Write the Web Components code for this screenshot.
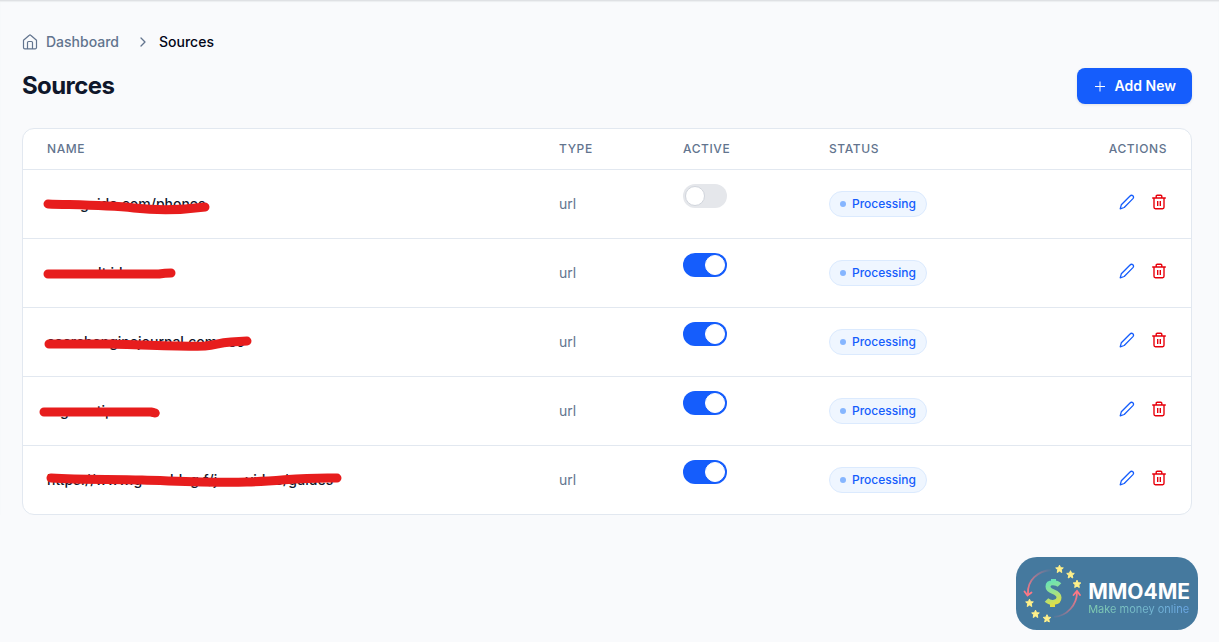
<!DOCTYPE html>
<html lang="en">
<head>
<meta charset="utf-8">
<meta name="viewport" content="width=device-width, initial-scale=1">
<title>Sources</title>
<style>
  body { margin: 0; min-height: 100vh; background: #f9fafc; color: #0f172b; font: 14px/20px Inter, "Liberation Sans", sans-serif; }
</style>
</head>
<body>
<sources-page></sources-page>
<script>
const define = (name, html, setup) => {
  const template = document.createElement('template');
  template.innerHTML = html;
  customElements.define(name, class extends HTMLElement {
    connectedCallback() {
      if (this.shadowRoot) return;
      const root = this.attachShadow({ mode: 'open' });
      root.append(template.content.cloneNode(true));
      if (setup) setup(this, root);
    }
  });
};

define('bread-crumb', `
<style>
  :host { display: block; }
  nav { display: flex; align-items: center; font-weight: 500; color: #62748e; }
  a { display: flex; align-items: center; gap: 8px; color: inherit; text-decoration: none; }
  .chevron { margin: 0 8px 0 16px; }
  span { color: #020618; }
</style>
<nav aria-label="Breadcrumb">
  <a href="#dashboard">
    <svg width="16" height="16" viewBox="0 0 16 16" fill="none" stroke="currentColor" stroke-width="1.2" stroke-linejoin="round"><path d="M1.5 6.2 7.3 1.3a1 1 0 0 1 1.4 0l5.800 4.900v7.300a1.300 1.300 0 0 1-1.300 1.300H2.800a1.300 1.300 0 0 1-1.300-1.300zM5.500 14.500V8.500q0-1 1-1h3q1 0 1 1v6"/></svg>
    Dashboard
  </a>
  <svg class="chevron" width="16" height="16" viewBox="0 0 16 16" fill="none" stroke="currentColor" stroke-width="1.3" stroke-linecap="round" stroke-linejoin="round"><path d="m6 4 4 4-4 4"/></svg>
  <span aria-current="page">Sources</span>
</nav>`);

define('primary-button', `
<style>
  :host { display: block; }
  button { display: flex; align-items: center; gap: 8px; height: 36px; padding: 0 16px; border: 0; border-radius: 8px; background: #155dfc; color: #fff; font: 600 14px/20px Inter, sans-serif; box-shadow: 0 1px 3px #0000001a; cursor: pointer; }
</style>
<button type="button">
  <svg width="14" height="14" viewBox="0 0 14 14" stroke="#fff" stroke-width="1"><path d="M7 2.500v10M2 7.500h10"/></svg>
  <slot></slot>
</button>`);

define('toggle-switch', `
<style>
  :host { display: block; }
  input { appearance: none; display: flex; align-items: center; box-sizing: border-box; width: 44px; height: 24px; margin: 0; padding: 2px; border-radius: 12px; background: #e5e7eb; cursor: pointer; }
  input::before { content: ""; box-sizing: border-box; width: 20px; height: 20px; border: 1px solid #d1d5dc; border-radius: 50%; background: #fff; }
  input:checked { background: #155dfc; justify-content: flex-end; }
  input:checked::before { border-color: #fff; }
</style>
<input type="checkbox" role="switch">`, (host, root) => {
  const input = root.querySelector('input');
  input.checked = host.hasAttribute('checked');
  input.setAttribute('aria-label', host.getAttribute('label'));
});

define('status-pill', `
<style>
  :host { display: inline-flex; align-items: center; gap: 6px; box-sizing: border-box; height: 26px; padding: 0 10px; border: 1px solid #dbeafe; border-radius: 13px; background: #eff6ff; color: #155dfc; font-size: 12px; line-height: 16px; font-weight: 500; vertical-align: middle; }
  i { width: 6px; height: 6px; border-radius: 50%; background: #86b6ff; }
</style>
<i></i><slot></slot>`);

define('row-actions', `
<style>
  :host { display: flex; justify-content: flex-end; gap: 16px; }
  button { display: block; width: 16px; height: 16px; padding: 0; border: 0; background: none; cursor: pointer; }
  svg { display: block; }
  .edit { color: #155dfc; }
  .delete { color: #e7000b; }
</style>
<button class="edit" type="button" aria-label="Edit"><svg width="16" height="16" viewBox="0 0 16 16" fill="none" stroke="currentColor" stroke-width="1.3" stroke-linejoin="round"><path d="M1.2 14.8 2.3 10.8 10.8 2.2c1-1 2.2-1.2 3.1-.4.9.9.7 2.1-.2 3.1L5.2 13.5z"/></svg></button>
<button class="delete" type="button" aria-label="Delete"><svg width="16" height="16" viewBox="0 0 16 16" fill="none" stroke="currentColor" stroke-width="1.4" stroke-linejoin="round"><path d="M1.2 4h13.600M5.200 4V2.200q0-1 1-1h3.600q1 0 1 1V4M3 4v9.300q0 1.400 1.400 1.400h7.200q1.400 0 1.400-1.400V4M6.700 7v5M9.300 7v5"/></svg></button>`);

define('struck-name', `
<style>
  :host { display: block; position: relative; height: 20px; white-space: nowrap; }
  svg { position: absolute; left: -8px; top: 0; overflow: visible; pointer-events: none; }
  .text { display: flex; }
</style>
<div class="text"></div>
<svg width="310" height="20" viewBox="-8 0 310 20" aria-hidden="true"><path fill="none" stroke="#e71d1d" stroke-width="9" stroke-linecap="round" stroke-linejoin="round"/></svg>`, (host, root) => {
  const text = root.querySelector('.text');
  for (const [gap, word] of JSON.parse(host.getAttribute('parts'))) {
    const part = document.createElement('span');
    part.textContent = word;
    part.style.marginLeft = gap + 'px';
    text.append(part);
  }
  root.querySelector('path').setAttribute('d', host.getAttribute('stroke'));
});

define('source-table', `
<style>
  :host { display: block; overflow: hidden; border: 1px solid #e2e8f0; border-radius: 12px; background: #fff; }
  table { width: 100%; border-collapse: separate; border-spacing: 0; table-layout: fixed; }
  th { height: 40px; padding: 0 24px; border-bottom: 1px solid #e2e8f0; text-align: left; font-size: 12px; line-height: 16px; font-weight: 500; letter-spacing: 0.05em; color: #62748e; }
  th:last-child { text-align: right; }
  td { box-sizing: border-box; height: 69px; padding: 0 24px; border-bottom: 1px solid #e2e8f0; vertical-align: middle; }
  tr:last-child td { height: 68px; border-bottom: 0; }
  .name { font-weight: 500; color: #0f172b; }
  .type { color: #62748e; }
  .active { padding-bottom: 16px; }
  .actions { padding-bottom: 4px; }
  .w-type { width: 124px; } .w-active { width: 146px; } .w-status { width: 200px; } .w-actions { width: 186px; }
</style>
<table>
  <colgroup><col><col class="w-type"><col class="w-active"><col class="w-status"><col class="w-actions"></colgroup>
  <thead><tr><th>NAME</th><th>TYPE</th><th>ACTIVE</th><th>STATUS</th><th>ACTIONS</th></tr></thead>
  <tbody></tbody>
</table>`, (host, root) => {
  const rows = [
    { parts: [[33, 'guide.com/phones']], stroke: 'M1 10 C30 11 58 11 87 14 S143 15 158 13', active: false },
    { parts: [[51, 'lt'], [4, 'i'], [5, 'l']], stroke: 'M1 11H112Q118 10 124 10', active: true },
    { parts: [[0, 'searchenginejournal.com'], [11, 'eo']], stroke: 'M2 12H65C95 13 125 15 158 14C170 13 170 11 184 10L200 9', active: true },
    { parts: [[13, 'g'], [28, 'ti'], [0, 'p']], stroke: 'M-3 11H104Q109 12 108 12', active: true },
    { parts: [[0, 'https://www.g'], [28, 'bl'], [8, 'g'], [0, '.f'], [0, '/j'], [28, 'vid'], [10, 's/guides']], stroke: 'M4 8C35 10 65 9 95 10C130 11 162 13 200 12S250 7 290 8', active: true }
  ];
  root.querySelector('tbody').innerHTML = rows.map((r, i) => `<tr>
    <td class="name"><struck-name parts='${JSON.stringify(r.parts)}' stroke="${r.stroke}"></struck-name></td>
    <td class="type">url</td>
    <td class="active"><toggle-switch label="Source ${i + 1} active"${r.active ? ' checked' : ''}></toggle-switch></td>
    <td><status-pill>Processing</status-pill></td>
    <td class="actions"><row-actions></row-actions></td></tr>`).join('');
});

define('brand-badge', `
<style>
  :host { position: fixed; right: 21px; bottom: 12px; display: flex; align-items: center; box-sizing: border-box; height: 73px; padding-right: 8px; border-radius: 21px; background: #45799e; }
  .words { display: flex; flex-direction: column; padding-top: 10px; }
  strong { font: 700 21px/20px Inter, sans-serif; color: #fff; }
  small { font: 400 11px/14px Inter, sans-serif; color: transparent; background: linear-gradient(90deg, #82cfae, #6ba7e8); background-clip: text; -webkit-background-clip: text; }
</style>
<svg width="72" height="73" viewBox="0 0 72 73" fill="none" aria-hidden="true">
  <defs>
    <linearGradient id="money" x1="32" y1="22" x2="43" y2="49" gradientUnits="userSpaceOnUse"><stop stop-color="#5fe3bd"/><stop offset=".5" stop-color="#9ae28e"/><stop offset="1" stop-color="#f1dd35"/></linearGradient>
    <linearGradient id="left" x1="11" y1="36" x2="36" y2="12" gradientUnits="userSpaceOnUse"><stop stop-color="#ff7885"/><stop offset="1" stop-color="#ff7885" stop-opacity="0"/></linearGradient>
    <linearGradient id="right" x1="61" y1="36" x2="36" y2="61" gradientUnits="userSpaceOnUse"><stop stop-color="#ff7885"/><stop offset="1" stop-color="#ff7885" stop-opacity="0"/></linearGradient>
    <path id="star" fill="#fff08a" stroke="#fff08a" stroke-linejoin="round" d="M0-3.8 1.1-1.3 3.8-1.1 1.8.8 2.3 3.5 0 2.1-2.3 3.5-1.8.8-3.8-1.1-1.1-1.3z"/>
  </defs>
  <path d="M35 13C22 14 11 23 12 37" stroke="url(#left)" stroke-width="1.8"/>
  <path d="m8.500 34.500 3 4 4-3" stroke="#ff7885" stroke-width="1.800" stroke-linecap="round"/>
  <path d="M38 60C51 59 61 48 61 35" stroke="url(#right)" stroke-width="1.800"/>
  <path d="m57.500 38 3.500-4 3 4" stroke="#ff7885" stroke-width="1.800" stroke-linecap="round"/>
  <path d="M43.500 28C41 25.500 32 24 32 29.500C32 36 43 33.500 43 40.500C43 46.500 34 46.500 30.500 43M37.500 22v6M36.500 44v6" stroke="url(#money)" stroke-width="5" stroke-linejoin="round"/>
  <use href="#star" x="43.500" y="12"/><use href="#star" x="54.500" y="17.500"/><use href="#star" x="61" y="27"/>
  <use href="#star" x="13.500" y="46"/><use href="#star" x="19.500" y="57"/><use href="#star" x="31" y="61.500"/>
</svg>
<div class="words"><strong>MMO4ME</strong><small>Make money online</small></div>`);

define('sources-page', `
<style>
  :host { display: block; border-top: 1px solid #dfe1e4; box-shadow: inset 0 1px 1px #eceef0; padding: 31px 27px 0 22px; }
  header { display: flex; align-items: center; justify-content: space-between; margin: 16px 0 24px; }
  h1 { margin: 0; font-size: 24px; line-height: 32px; font-weight: 700; letter-spacing: -0.025em; }
</style>
<bread-crumb></bread-crumb>
<header><h1>Sources</h1><primary-button>Add New</primary-button></header>
<source-table></source-table>
<brand-badge></brand-badge>`);
</script>
</body>
</html>
